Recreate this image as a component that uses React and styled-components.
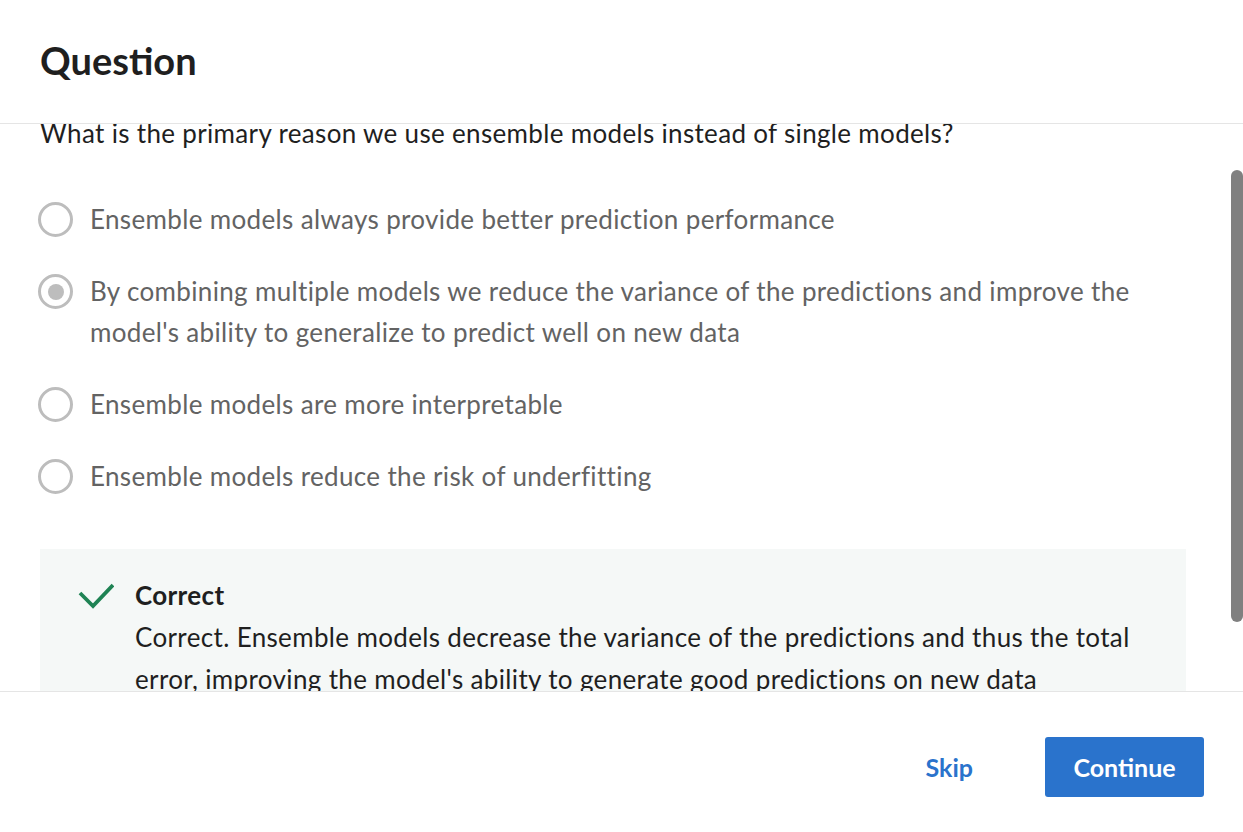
import React, { useLayoutEffect, useRef } from "react";
import styled, { createGlobalStyle } from "styled-components";

const Global = createGlobalStyle`
  html, body { margin: 0; padding: 0; background: #fff; }
  body { font-family: Lato, "Open Sans", sans-serif; -webkit-font-smoothing: antialiased; }
  * { box-sizing: border-box; }
`;

const Page = styled.div`
  height: 832px;
  display: flex;
  flex-direction: column;
  overflow: hidden;
  background: #fff;
`;

const Header = styled.header`
  flex: none;
  height: 124px;
  padding: 0 40px;
  border-bottom: 1px solid #e5e5e5;
`;

const Title = styled.h1`
  margin: 0;
  padding-top: 38px;
  font-size: 38px;
  line-height: 44px;
  font-weight: 700;
  color: #1f1f1f;
`;

const ScrollArea = styled.div`
  position: relative;
  flex: 1;
  min-height: 0;
  display: flex;
`;

const Body = styled.main`
  flex: 1;
  overflow-y: scroll;
  scrollbar-width: none;
  padding: 50px 57px 47px 40px;
  &::-webkit-scrollbar { display: none; }
`;

const Thumb = styled.div`
  position: absolute;
  right: 0;
  top: 46px;
  width: 12px;
  height: 452px;
  border-radius: 6px;
  background: #808080;
`;

const Prompt = styled.p`
  margin: 0;
  font-size: 26px;
  letter-spacing: 0.33px;
  line-height: 34px;
  color: #1f1f1f;
`;

const Options = styled.div`
  margin-top: 49px;
  display: flex;
  flex-direction: column;
  gap: 31px;
`;

const Option = styled.label`
  display: flex;
  align-items: flex-start;
  gap: 17px;
  margin-left: -2px;
`;

const Radio = styled.span`
  flex: none;
  width: 35px;
  height: 35px;
  margin-top: 3px;
  border-radius: 50%;
  border: 3px solid #bdbdbd;
  display: flex;
  align-items: center;
  justify-content: center;
  &::after {
    content: "";
    width: 16px;
    height: 16px;
    border-radius: 50%;
    background: #bdbdbd;
    display: ${(p) => (p.$checked ? "block" : "none")};
  }
`;

const OptionText = styled.span`
  font-size: 26px;
  letter-spacing: 0.35px;
  line-height: 41px;
  color: #636363;
`;

const Feedback = styled.section`
  margin-top: 52px;
  background: #f5f8f7;
  padding: 28px 36px 32px 38px;
  display: flex;
  align-items: flex-start;
  gap: 21px;
`;

const CheckIcon = styled.svg`
  flex: none;
  width: 36px;
  height: 36px;
  margin-top: 2px;
`;

const FeedbackText = styled.div`
  display: flex;
  flex-direction: column;
`;

const FeedbackTitle = styled.strong`
  font-size: 26px;
  letter-spacing: 0.35px;
  line-height: 36px;
  font-weight: 700;
  color: #1f1f1f;
`;

const FeedbackBody = styled.p`
  margin: 3px 0 0;
  font-size: 26px;
  letter-spacing: 0.35px;
  line-height: 42px;
  color: #1f1f1f;
`;

const Footer = styled.footer`
  flex: none;
  height: 141px;
  border-top: 1px solid #e5e5e5;
  display: flex;
  align-items: center;
  justify-content: flex-end;
  padding: 9px 39px 0 0;
  gap: 48px;
`;

const TextButton = styled.button`
  border: none;
  background: none;
  padding: 0 24px;
  height: 60px;
  font-family: inherit;
  font-size: 25px;
  font-weight: 700;
  color: #2a73cc;
  cursor: pointer;
`;

const PrimaryButton = styled.button`
  border: none;
  border-radius: 3px;
  background: #2a73cc;
  width: 159px;
  height: 60px;
  font-family: inherit;
  font-size: 25px;
  font-weight: 700;
  color: #fff;
  cursor: pointer;
`;

const options = [
  { text: "Ensemble models always provide better prediction performance" },
  {
    text: "By combining multiple models we reduce the variance of the predictions and improve the model's ability to generalize to predict well on new data",
    checked: true,
  },
  { text: "Ensemble models are more interpretable" },
  { text: "Ensemble models reduce the risk of underfitting" },
];

export default function App() {
  const bodyRef = useRef(null);
  useLayoutEffect(() => {
    if (bodyRef.current) bodyRef.current.scrollTop = 58;
  }, []);
  return (
    <>
      <Global />
      <Page>
        <Header>
          <Title>Question</Title>
        </Header>
        <ScrollArea>
          <Body ref={bodyRef}>
            <Prompt>What is the primary reason we use ensemble models instead of single models?</Prompt>
            <Options>
              {options.map((o, i) => (
                <Option key={i}>
                  <Radio $checked={o.checked} />
                  <OptionText>{o.text}</OptionText>
                </Option>
              ))}
            </Options>
            <Feedback>
              <CheckIcon viewBox="0 0 36 36" fill="none">
                <path d="M2 14 L15 27 L35 6" stroke="#1f8354" strokeWidth="3.8" strokeLinecap="butt" strokeLinejoin="miter" />
              </CheckIcon>
              <FeedbackText>
                <FeedbackTitle>Correct</FeedbackTitle>
                <FeedbackBody>
                  Correct. Ensemble models decrease the variance of the predictions and thus the total error, improving the model's ability to generate good predictions on new data
                </FeedbackBody>
              </FeedbackText>
            </Feedback>
          </Body>
          <Thumb />
        </ScrollArea>
        <Footer>
          <TextButton>Skip</TextButton>
          <PrimaryButton>Continue</PrimaryButton>
        </Footer>
      </Page>
    </>
  );
}
